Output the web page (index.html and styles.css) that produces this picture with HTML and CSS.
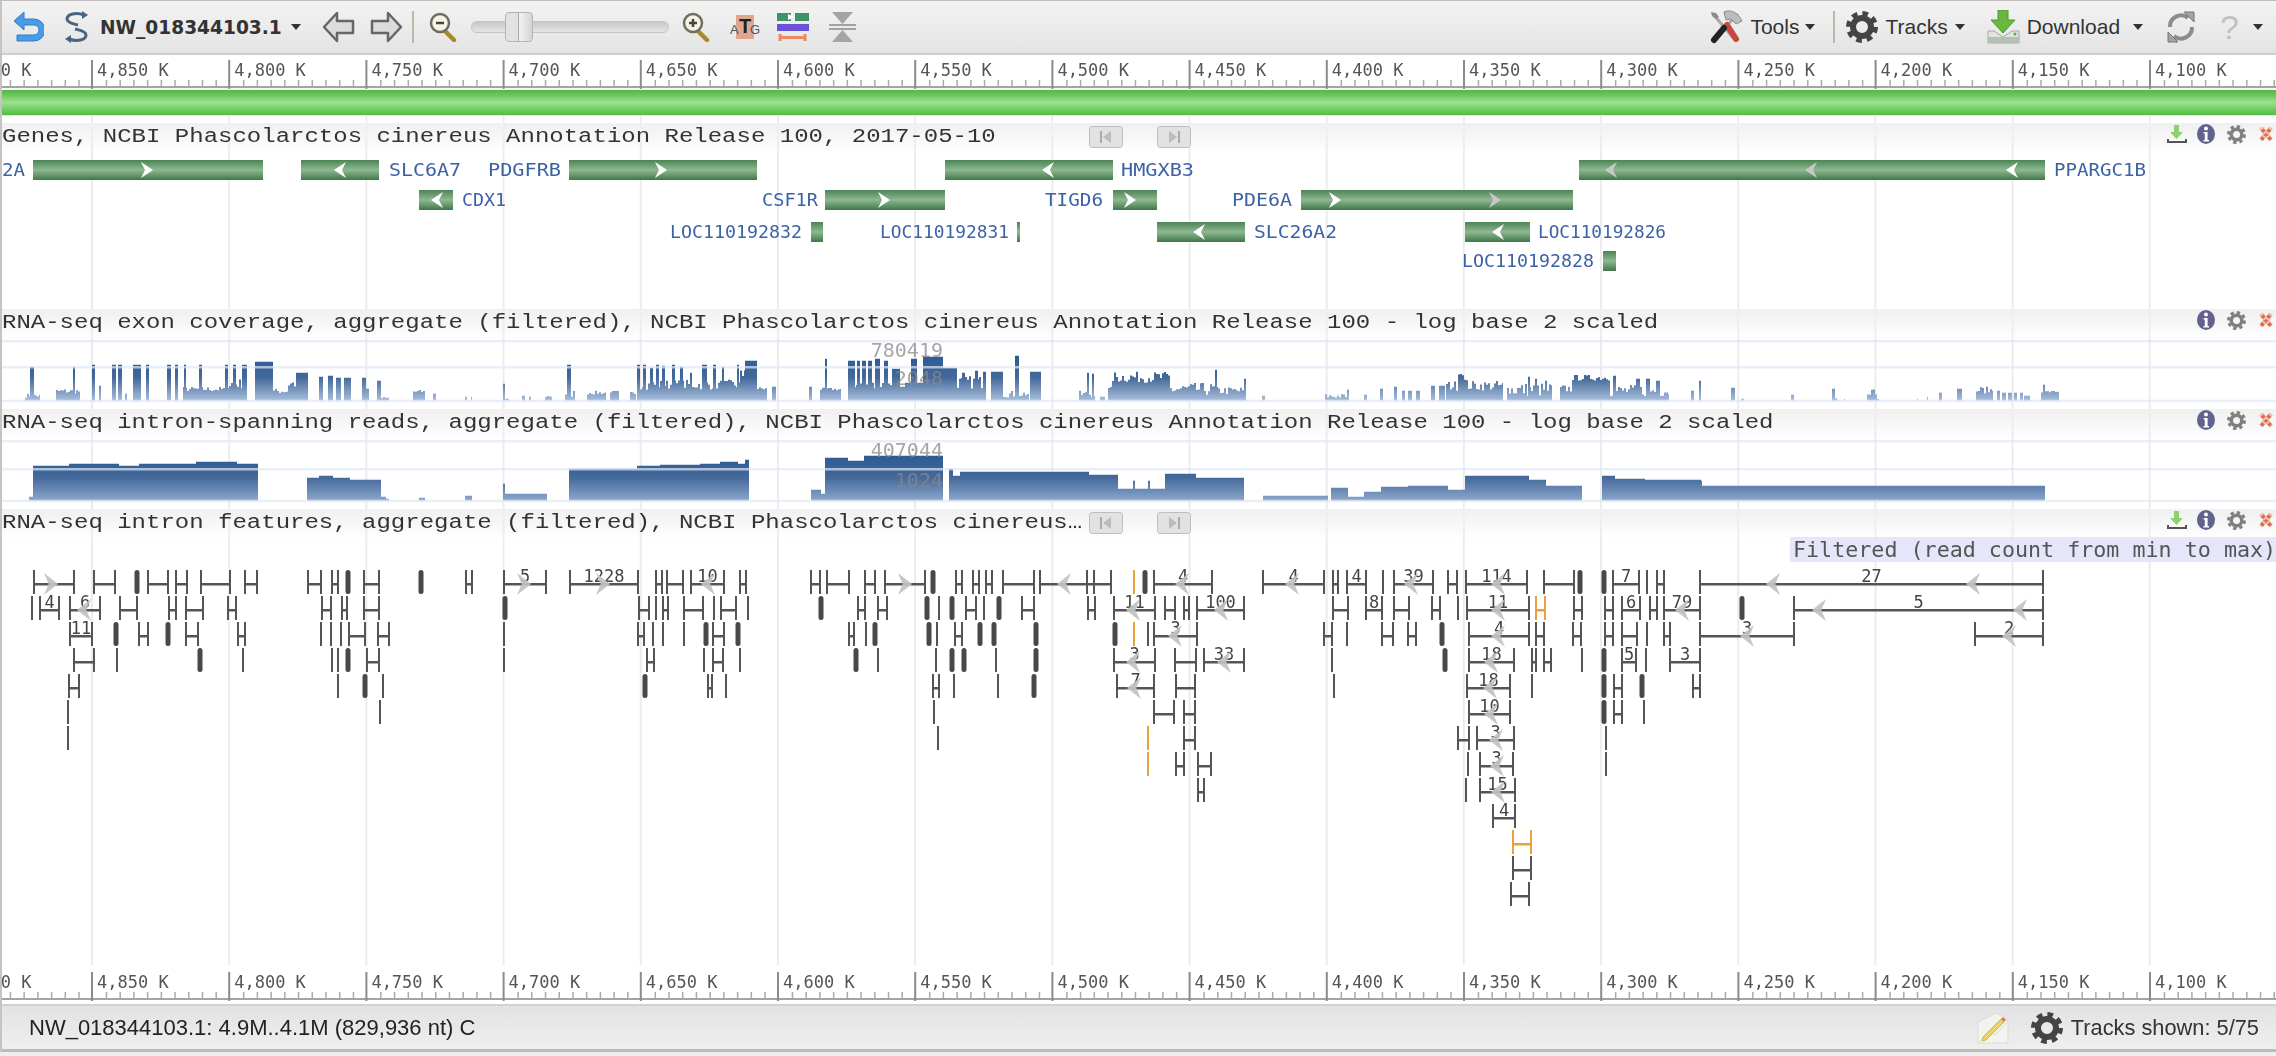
FILE: index.html
```html
<!DOCTYPE html>
<html lang="en">
  <head>
    <meta charset="UTF-8" />
    <title>NW_018344103.1 genome view</title>
    <link rel="stylesheet" href="styles.css">
  </head>

  <body>
    <!-- shared icons -->
    <svg class="defs" width="0" height="0">
      <symbol id="gear" viewBox="0 0 32 32">
        <circle cx="16" cy="16" r="9" fill="none" stroke="currentColor" stroke-width="6" />
        <circle cx="16" cy="16" r="13.5" fill="none" stroke="currentColor" stroke-width="5" stroke-dasharray="5.6 5" />
      </symbol>
      <symbol id="info" viewBox="0 0 18 20">
        <ellipse cx="9" cy="10" rx="9" ry="10" fill="#62628f" />
        <circle cx="9" cy="4.6" r="2" fill="#fff" />
        <path d="M6.6 8h4v8h1.4v1.6H6.4V16h1.4V9.6H6.6z" fill="#fff" />
      </symbol>
      <symbol id="close" viewBox="0 0 14 16">
        <path d="M2 2l10 12M12 2L2 14" stroke="#dc6a52" stroke-width="4" />
        <path d="M2 2l10 12M12 2L2 14" stroke="#f4c4b0" stroke-width="4" stroke-dasharray="2 3" />
      </symbol>
      <symbol id="save" viewBox="0 0 20 20">
        <path d="M7 1h5v7h4l-6.500 7L3 8h4z" fill="#8ed070" />
        <path d="M1 15v3h18v-3" fill="none" stroke="#555" stroke-width="2" />
      </symbol>
      <symbol id="first" viewBox="0 0 34 22">
        <rect x="0.500" y="0.500" width="33" height="21" rx="3" fill="#e2e2e2" stroke="#bdbdbd" />
        <path d="M12 5v12" stroke="#aaa" stroke-width="2" />
        <path d="M22 5v12l-8-6z" fill="#bcbcbc" />
      </symbol>
      <symbol id="last" viewBox="0 0 34 22">
        <rect x="0.500" y="0.500" width="33" height="21" rx="3" fill="#e2e2e2" stroke="#bdbdbd" />
        <path d="M22 5v12" stroke="#aaa" stroke-width="2" />
        <path d="M12 5v12l8-6z" fill="#bcbcbc" />
      </symbol>
    </svg>

    <div class="app">
      <div class="toolbar">
        <svg class="ico back" width="31" height="30" viewBox="0 0 31 30">
          <path d="M11 0L1 9l10 9v-5h10a5 5 0 0 1 0 10H4v6h17a11 11 0 0 0 0-22H11z" fill="#4a9be6" stroke="#2f7fc8" />
        </svg>
        <svg class="ico swirl" width="27" height="32" viewBox="0 0 27 32">
          <path d="M21 4C13 1 4 3 4 8c0 4 7 5 11 6" fill="none" stroke="#48647f" stroke-width="3" />
          <path d="M6 28c8 3 17 1 17-4 0-4-7-5-11-6" fill="none" stroke="#48647f" stroke-width="3" />
          <path d="M19 0l6 4-6 4zM8 24l-6 4 6 4z" fill="#48647f" />
        </svg>
        <span class="seq-name">NW_018344103.1</span>
        <span class="caret"></span>
        <svg class="ico nav-l" width="33" height="32" viewBox="0 0 33 32">
          <path d="M15 2L2 16l13 14v-8h16V10H15z" fill="#dcdcdc" stroke="#666" stroke-width="2.500" stroke-linejoin="round" />
        </svg>
        <svg class="ico nav-r" width="33" height="32" viewBox="0 0 33 32">
          <path d="M18 2l13 14-13 14v-8H2V10h16z" fill="#dcdcdc" stroke="#666" stroke-width="2.500" stroke-linejoin="round" />
        </svg>
        <span class="sep first-sep"></span>
        <svg class="ico zoom-out" width="28" height="30" viewBox="0 0 28 30">
          <path d="M16 19l9 9" stroke="#a88a2c" stroke-width="4.500" stroke-linecap="round" />
          <circle cx="11" cy="11" r="9" fill="#f4f4e6" stroke="#6e6e5e" stroke-width="2.500" />
          <path d="M7 11h8" stroke="#444" stroke-width="2.500" />
        </svg>
        <div class="slider"><span class="thumb"></span></div>
        <svg class="ico zoom-in" width="28" height="30" viewBox="0 0 28 30">
          <path d="M16 19l9 9" stroke="#a88a2c" stroke-width="4.500" stroke-linecap="round" />
          <circle cx="11" cy="11" r="9" fill="#f4f4e6" stroke="#6e6e5e" stroke-width="2.500" />
          <path d="M7 11h8M11 7v8" stroke="#444" stroke-width="2.500" />
        </svg>
        <svg class="ico atg" width="30" height="30" viewBox="0 0 30 30">
          <rect x="6" y="3" width="18" height="24" fill="#e0a78e" />
          <text x="0" y="22" class="atg-a">A</text>
          <text x="9" y="21" class="atg-t">T</text>
          <text x="20" y="22" class="atg-g">G</text>
        </svg>
        <svg class="ico colors" width="32" height="30" viewBox="0 0 32 30">
          <rect x="0" y="1" width="14" height="8" fill="#3d9465" />
          <rect x="18" y="1" width="14" height="8" fill="#3d9465" />
          <path d="M11 2l7 3-7 3z" fill="#fff" />
          <rect x="0" y="12" width="32" height="7" fill="#6a52d8" />
          <path d="M3 22v7M28 22v7M3 25.500h25" stroke="#ec8a62" stroke-width="3" fill="none" />
        </svg>
        <svg class="ico squeeze" width="27" height="32" viewBox="0 0 27 32">
          <path d="M3 1h21l-10.500 12zM3 31h21L13.500 19z" fill="#a4a4a4" />
          <path d="M0 14h27M0 18h27" stroke="#8a8a8a" stroke-width="1.500" />
        </svg>

        <div class="tool-right">
          <svg class="ico" width="33" height="34" viewBox="0 0 33 34">
            <path d="M28 4L3 30" stroke="#a8a8a8" stroke-width="3" />
            <path d="M3 4l22 26" stroke="#a8a8a8" stroke-width="3" />
            <path d="M17 15l9 14" stroke="#c9473e" stroke-width="6" stroke-linecap="round" />
            <path d="M14 18L4 30" stroke="#222" stroke-width="6" stroke-linecap="round" />
            <path d="M14 2c6-3 14 0 18 9l-6 3-5-5-5 1z" fill="#bcbcbc" stroke="#8a8a8a" />
            <path d="M1 2l5 1 3 4-3 2-4-3z" fill="#8a8a8a" />
          </svg>
          <span class="tool-label">Tools</span>
          <span class="caret caret-tools"></span>
          <span class="sep tools-sep"></span>
          <svg class="ico gear-big"><use href="#gear" /></svg>
          <span class="tool-label">Tracks</span>
          <span class="caret caret-tracks"></span>
          <svg class="ico dl" width="33" height="34" viewBox="0 0 33 34">
            <path d="M11 0h10v10h7L16 23 4 10h7z" fill="#67b83c" stroke="#4c9a28" />
            <path d="M1 21h6l9 6 9-6h7v12H1z" fill="#e2e2e2" stroke="#a8a8a8" />
            <rect x="1" y="27" width="31" height="6" fill="#b4c0b4" />
            <circle cx="28" cy="24" r="1.500" fill="#58b040" />
          </svg>
          <span class="tool-label">Download</span>
          <span class="caret caret-dl"></span>
          <svg class="ico refresh" width="28" height="32" viewBox="0 0 28 32">
            <path d="M3 16A11 11 0 0 1 21 7" fill="none" stroke="#8c8c8c" stroke-width="4" />
            <path d="M25 16A11 11 0 0 1 7 25" fill="none" stroke="#8c8c8c" stroke-width="4" />
            <path d="M17 1h10v10zM11 31H1V21z" fill="#a4a4a4" stroke="#777" />
          </svg>
          <span class="help">?</span>
          <span class="caret caret-help"></span>
        </div>
      </div>

      <div class="viewport">
        <div class="gridlines"></div>

        <svg class="ruler" id="rulerTop"></svg>
        <div class="overview"></div>

        <div class="track genes">
          <div class="track-head">
            <span class="title">Genes, NCBI Phascolarctos cinereus Annotation Release 100, 2017-05-10</span>
            <svg class="pager pager-first"><use href="#first" /></svg>
            <svg class="pager pager-last"><use href="#last" /></svg>
            <div class="actions">
              <svg class="act-save"><use href="#save" /></svg>
              <svg class="act-info"><use href="#info" /></svg>
              <svg class="act-gear"><use href="#gear" /></svg>
              <svg class="act-close"><use href="#close" /></svg>
            </div>
          </div>
          <svg class="plot" id="genePlot"></svg>
        </div>

        <div class="track graph">
          <div class="track-head">
            <span class="title">RNA-seq exon coverage, aggregate (filtered), NCBI Phascolarctos cinereus Annotation Release 100 - log base 2 scaled</span>
            <div class="actions">
              <svg class="act-info"><use href="#info" /></svg>
              <svg class="act-gear"><use href="#gear" /></svg>
              <svg class="act-close"><use href="#close" /></svg>
            </div>
          </div>
          <svg class="plot" id="exonPlot"></svg>
        </div>

        <div class="track graph">
          <div class="track-head">
            <span class="title">RNA-seq intron-spanning reads, aggregate (filtered), NCBI Phascolarctos cinereus Annotation Release 100 - log base 2 scaled</span>
            <div class="actions">
              <svg class="act-info"><use href="#info" /></svg>
              <svg class="act-gear"><use href="#gear" /></svg>
              <svg class="act-close"><use href="#close" /></svg>
            </div>
          </div>
          <svg class="plot" id="spanPlot"></svg>
        </div>

        <div class="track features">
          <div class="track-head">
            <span class="title">RNA-seq intron features, aggregate (filtered), NCBI Phascolarctos cinereus…</span>
            <svg class="pager pager-first"><use href="#first" /></svg>
            <svg class="pager pager-last"><use href="#last" /></svg>
            <div class="actions">
              <svg class="act-save"><use href="#save" /></svg>
              <svg class="act-info"><use href="#info" /></svg>
              <svg class="act-gear"><use href="#gear" /></svg>
              <svg class="act-close"><use href="#close" /></svg>
            </div>
          </div>
          <svg class="plot" id="featPlot"></svg>
          <span class="filter-note">Filtered (read count from min to max)</span>
        </div>

        <svg class="ruler ruler-bottom" id="rulerBottom"></svg>
      </div>

      <div class="statusbar">
        <span class="location">NW_018344103.1: 4.9M..4.1M (829,936 nt) C</span>
        <svg class="ico note" width="32" height="32" viewBox="0 0 32 32">
          <path d="M1 10L20 1l11 8v22H1z" fill="#f4f4ee" stroke="#dcdcd4" />
          <path d="M1 31l13-11 4 3 13-14" fill="none" stroke="#dcdcd4" />
          <path d="M6 25L24 7l3 3L9 28l-4 1z" fill="#ecd566" stroke="#cdb54c" />
          <path d="M24 7l2-2 3 3-2 2z" fill="#d87a7a" />
        </svg>
        <svg class="ico gear-status"><use href="#gear" /></svg>
        <span class="tracks-shown">Tracks shown: 5/75</span>
      </div>
    </div>

    <script src="script.js"></script>
  </body>
</html>
```

FILE: styles.css
```css
* {
  box-sizing: border-box;
}

html,
body {
  margin: 0;
  height: 100%;
  overflow: hidden;
  background-color: #eceef0;
  font-family: "Liberation Sans", Arial, sans-serif;
}

.defs {
  position: absolute;
}

.app {
  position: relative;
  display: flex;
  flex-direction: column;
  height: 1052px;
  filter: blur(0.45px);
}

.app::after {
  content: "";
  position: absolute;
  top: 0;
  bottom: 0;
  left: 0;
  width: 2px;
  background-color: #c8c2c2;
}

.ico {
  flex: none;
  display: block;
}

.toolbar {
  flex: none;
  display: flex;
  align-items: center;
  height: 55px;
  padding-left: 13px;
  border-top: 1px solid #c4b9b9;
  border-bottom: 2px solid #cfcfcf;
  background: linear-gradient(#f3f3f3, #e4e4e4);
}

.swirl {
  margin-left: 19px;
}

.seq-name {
  margin-left: 10px;
  font-family: "DejaVu Sans", sans-serif;
  font-size: 18.6px;
  font-weight: bold;
  color: #333;
}

.caret {
  flex: none;
  width: 0;
  height: 0;
  margin-left: 9px;
  border-left: 5px solid transparent;
  border-right: 5px solid transparent;
  border-top: 6px solid #333;
}

.nav-l {
  margin-left: 21px;
}

.nav-r {
  margin-left: 15px;
}

.sep {
  flex: none;
  width: 2px;
  height: 32px;
  background-color: #bdb8a8;
}

.first-sep {
  margin-left: 9px;
}

.zoom-out {
  margin-left: 15px;
}

.slider {
  position: relative;
  flex: none;
  width: 198px;
  height: 12px;
  margin-left: 14px;
  border: 1px solid #c4c4c4;
  border-radius: 6px;
  background: linear-gradient(#c8c8c8, #e4e4e4);
}

.thumb {
  position: absolute;
  top: -10px;
  left: 33px;
  width: 28px;
  height: 30px;
  border: 1px solid #b4b4b4;
  border-radius: 4px;
  background: linear-gradient(90deg, #e2e2e2 45%, #a8a8a8 48%, #f2f2f2 52%, #d4d4d4);
}

.zoom-in {
  margin-left: 13px;
}

.atg {
  margin-left: 20px;
}

.atg-a,
.atg-g {
  font-family: "Liberation Sans", sans-serif;
  font-size: 13px;
  fill: #555;
}

.atg-t {
  font-family: "Liberation Sans", sans-serif;
  font-size: 20px;
  font-weight: bold;
  fill: #222;
}

.colors {
  margin-left: 17px;
}

.squeeze {
  margin-left: 20px;
}

.tool-right {
  display: flex;
  align-items: center;
  margin-left: auto;
  padding-right: 13px;
}

.tool-label {
  margin-left: 7px;
  font-size: 21px;
  color: #333;
}

.caret-tools {
  margin-left: 6px;
}

.caret-tracks {
  margin-left: 7px;
}

.caret-dl {
  margin-left: 13px;
}

.caret-help {
  margin-left: 14px;
}

.tools-sep {
  margin-left: 18px;
}

.gear-big {
  width: 32px;
  height: 32px;
  margin-left: 11px;
  color: #444;
}

.dl {
  margin-left: 22px;
}

.refresh {
  margin-left: 24px;
}

.help {
  margin-left: 25px;
  font-size: 34px;
  line-height: 34px;
  color: #c0c0c0;
}

.viewport {
  position: relative;
  flex: 1;
  display: flex;
  flex-direction: column;
  min-height: 0;
  background-color: #fff;
}

.gridlines {
  position: absolute;
  top: 61px;
  bottom: 39px;
  left: 0;
  right: 0;
  background-image: linear-gradient(to right, #ececee 2px, transparent 2px);
  background-size: 137.2px 100%;
  background-position: 91px 0;
}

.ruler {
  position: relative;
  flex: none;
  display: block;
  width: 100%;
  height: 35px;
}

.ruler-bottom {
  margin-bottom: 2px;
}

.ruler-label {
  font-family: "DejaVu Sans Mono", monospace;
  font-size: 17px;
  fill: #555;
}

.overview {
  position: relative;
  flex: none;
  height: 26px;
  margin-bottom: 7px;
  border-bottom: 1px solid #d8f0d4;
  background: linear-gradient(#52b842, #66c557 18%, #9ce192 50%, #69c95a 82%, #55bb45);
}

.track {
  position: relative;
  flex: none;
  display: flex;
  flex-direction: column;
}

.genes {
  height: 186px;
}

.graph {
  height: 100px;
}

.features {
  flex: 1;
  min-height: 0;
}

.track-head {
  position: relative;
  flex: none;
  height: 30px;
  padding-left: 2px;
  background: linear-gradient(#f0f0f0, rgba(255, 255, 255, 0));
}

.title {
  display: inline-block;
  font-family: "Liberation Mono", monospace;
  font-size: 20px;
  line-height: 28px;
  color: #333;
  white-space: nowrap;
  transform: scaleX(1.2);
  transform-origin: left center;
}

.pager {
  position: absolute;
  top: 3px;
  width: 34px;
  height: 22px;
}

.pager-first {
  left: 1089px;
}

.pager-last {
  left: 1157px;
}

.actions {
  position: absolute;
  top: 0;
  right: 3px;
  display: flex;
  align-items: center;
  height: 22px;
}

.actions svg {
  display: block;
  flex: none;
}

.act-save {
  width: 20px;
  height: 20px;
  margin-right: 10px;
}

.act-info {
  width: 18px;
  height: 20px;
}

.act-gear {
  width: 19px;
  height: 19px;
  margin-left: 12px;
  color: #808080;
}

.act-close {
  width: 14px;
  height: 16px;
  margin-left: 13px;
}

.plot {
  flex: 1;
  display: block;
  width: 100%;
  min-height: 0;
  overflow: visible;
}

.gene-label {
  font-family: "DejaVu Sans Mono", monospace;
  font-size: 18px;
  fill: #3c62a6;
}

.graph-label {
  font-family: "DejaVu Sans Mono", monospace;
  font-size: 20px;
  fill: #888;
  fill-opacity: 0.75;
}

.feat-label {
  font-family: "DejaVu Sans Mono", monospace;
  font-size: 17px;
  fill: #444;
}

.filter-note {
  position: absolute;
  top: 28px;
  left: 1790px;
  right: 0;
  height: 25px;
  padding-left: 3px;
  overflow: hidden;
  font-family: "DejaVu Sans Mono", monospace;
  font-size: 21.7px;
  line-height: 25px;
  color: #555;
  white-space: nowrap;
  background-color: #e6e6fa;
}

.statusbar {
  flex: none;
  display: flex;
  align-items: center;
  height: 48px;
  padding: 0 17px 0 29px;
  border-top: 2px solid #d2d2d2;
  border-bottom: 3px solid #c4b9b9;
  background: linear-gradient(#e2e2e2, #efefef);
}

.location {
  flex: 1;
  font-size: 22px;
  color: #222;
}

.gear-status {
  width: 32px;
  height: 32px;
  margin-left: 22px;
  color: #444;
}

.tracks-shown {
  margin-left: 8px;
  font-size: 21.8px;
  color: #333;
}
```

FILE: script.js
```js
const SVG_NS = "http://www.w3.org/2000/svg";
const WIDTH = 2276;
const TICK0 = 92;
const TICK_STEP = 137.2;

function el(parent, name, attrs, text) {
  const node = document.createElementNS(SVG_NS, name);
  for (const key in attrs) node.setAttribute(key, attrs[key]);
  if (text !== undefined) node.textContent = text;
  parent.appendChild(node);
  return node;
}

// ---- rulers ----
function drawRuler(svg) {
  el(svg, "rect", { x: 0, y: 31, width: WIDTH, height: 2, fill: "#a4a4a4" });
  for (let i = -1; i < 17; i++) {
    const x = TICK0 + i * TICK_STEP;
    el(svg, "rect", { x: x - 1, y: 5, width: 2, height: 29, fill: "#8c8c8c" });
    el(svg, "text", { x: x + 5, y: 21, class: "ruler-label" }, (4850 - i * 50).toLocaleString("en-US") + " K");
    for (let j = 1; j < 10; j++) {
      el(svg, "rect", { x: x + (j * TICK_STEP) / 10, y: 25, width: 1.5, height: 6, fill: "#aaa" });
    }
  }
}

// ---- genes ----
const BAR_ROWS = [7, 37, 69, 98];

const genes = [
  // row, x0, x1, arrow direction, arrows [x, faded], label, label x, label width
  [0, 33, 263, 1, [[147]], "2A", 2, 23],
  [0, 301, 379, -1, [[340]], "SLC6A7", 389, 72],
  [0, 569, 757, 1, [[661]], "PDGFRB", 488, 73],
  [0, 945, 1113, -1, [[1048]], "HMGXB3", 1121, 73],
  [0, 1579, 2045, -1, [[1611, 1], [1811, 1], [2012]], "PPARGC1B", 2054, 92],
  [1, 419, 453, -1, [[437]], "CDX1", 462, 44],
  [1, 825, 945, 1, [[884]], "CSF1R", 762, 56],
  [1, 1113, 1157, 1, [[1130]], "TIGD6", 1045, 58],
  [1, 1301, 1573, 1, [[1335], [1495, 1]], "PDE6A", 1232, 60],
  [2, 811, 823, 0, [], "LOC110192832", 670, 132],
  [2, 1017, 1020, 0, [], "LOC110192831", 880, 129],
  [2, 1157, 1245, -1, [[1199]], "SLC26A2", 1254, 83],
  [2, 1465, 1530, -1, [[1498]], "LOC110192826", 1538, 128],
  [3, 1603, 1616, 0, [], "LOC110192828", 1462, 132],
];

function drawArrow(svg, x, y, dir, w, h, fill, opacity) {
  const d = `M${x - (dir * w) / 2} ${y - h / 2}L${x + (dir * w) / 2} ${y}L${x - (dir * w) / 2} ${y + h / 2}L${x - (dir * w) / 6} ${y}Z`;
  el(svg, "path", { d: d, fill: fill, "fill-opacity": opacity === undefined ? 1 : opacity });
}

function drawGenes(svg) {
  const defs = el(svg, "defs", {});
  const grad = el(defs, "linearGradient", { id: "geneFill", x1: 0, y1: 0, x2: 0, y2: 1 });
  el(grad, "stop", { offset: "0", "stop-color": "#4c8452" });
  el(grad, "stop", { offset: "0.5", "stop-color": "#8db893" });
  el(grad, "stop", { offset: "1", "stop-color": "#3f7846" });
  genes.forEach(([row, x0, x1, dir, arrows, label, labelX, labelW]) => {
    const y = BAR_ROWS[row];
    el(svg, "rect", { x: x0, y: y, width: x1 - x0, height: 20, fill: "url(#geneFill)" });
    arrows.forEach(([ax, faded]) => {
      drawArrow(svg, ax, y + 10, dir, 12, 16, faded ? "#c8c8c8" : "#fff");
    });
    el(svg, "text", { x: labelX, y: y + 16, textLength: labelW, lengthAdjust: "spacingAndGlyphs", class: "gene-label" }, label);
  });
}

// ---- graphs ----
let seed = 7;
function rnd() {
  seed = (seed * 16807) % 2147483647;
  return seed / 2147483647;
}

function ragged(x0, x1, low, high) {
  const out = [];
  for (let x = x0; x < x1; x += 2) {
    out.push([x, Math.min(x + 2, x1), low + rnd() * (high - low)]);
  }
  return out;
}

const exonBars = [
  ...ragged(25, 40, 3, 7), [30, 34, 34],
  ...ragged(56, 80, 7, 12), [73, 75, 34],
  [92, 95, 36], [99, 101, 15], [112, 116, 36], [118, 122, 36], [125, 127, 7],
  [133, 141, 36], [146, 149, 36], [167, 171, 36], [175, 178, 36], [184, 186, 36],
  ...ragged(183, 225, 9, 14), ...ragged(225, 247, 12, 22),
  [199, 202, 36], [225, 228, 36], [233, 236, 36], [242, 247, 36], [255, 273, 39],
  ...ragged(273, 288, 7, 12), ...ragged(288, 298, 12, 22), [296, 308, 28],
  [319, 323, 24], [328, 333, 25], [336, 341, 23], [344, 351, 23], [362, 366, 23],
  [366, 369, 12], [377, 381, 20], ...ragged(381, 389, 1, 4),
  ...ragged(413, 425, 7, 11), [433, 436, 7], [465, 467, 4], [471, 472, 4],
  [503, 505, 17], [505, 509, 2], [522, 525, 5], [529, 531, 4], ...ragged(545, 552, 3, 6),
  ...ragged(565, 575, 3, 11), [567, 571, 36],
  ...ragged(587, 606, 6, 10), ...ragged(610, 619, 8, 10), ...ragged(630, 636, 6, 9),
  ...ragged(640, 745, 11, 21), ...ragged(757, 767, 10, 14), ...ragged(740, 750, 20, 34),
  [637, 640, 36], [643, 646, 36], [650, 653, 33], [656, 659, 36], [662, 665, 35],
  [672, 675, 36], [680, 683, 34], [690, 692, 28], [702, 707, 36], [713, 716, 36],
  [722, 724, 34], [737, 739, 36], [745, 757, 40], [772, 776, 14],
  [809, 812, 14], ...ragged(820, 841, 10, 13), [825, 827, 42],
  ...ragged(848, 892, 12, 20),
  [848, 855, 40], [857, 860, 40], [862, 866, 40], [868, 872, 40], [875, 880, 42],
  [884, 888, 40], [892, 900, 32], [900, 905, 14], [905, 911, 18], [911, 917, 42], [917, 923, 18],
  [923, 943, 44], [943, 957, 33], ...ragged(957, 986, 12, 25),
  [962, 965, 28], [975, 978, 30], [983, 986, 29], [991, 1003, 29], ...ragged(1003, 1015, 3, 10),
  [1015, 1019, 45], ...ragged(1019, 1029, 4, 10), [1030, 1041, 29],
  ...ragged(1079, 1095, 3, 10), [1087, 1089, 28], [1092, 1094, 27], [1100, 1105, 4],
  ...ragged(1108, 1112, 8, 14), ...ragged(1112, 1170, 18, 29), ...ragged(1170, 1216, 5, 18),
  [1215, 1217, 31], ...ragged(1216, 1244, 6, 14), [1244, 1246, 22], [1262, 1265, 5],
  ...ragged(1325, 1347, 2, 7), [1347, 1349, 11], [1364, 1367, 6], [1380, 1383, 12],
  [1394, 1397, 14], [1402, 1405, 10], [1408, 1412, 10], [1416, 1420, 10],
  [1431, 1435, 15], [1439, 1445, 15], ...ragged(1446, 1503, 10, 20), ...ragged(1458, 1468, 20, 29),
  ...ragged(1507, 1552, 4, 18), [1528, 1530, 24], [1535, 1537, 22], [1545, 1547, 20],
  ...ragged(1560, 1572, 8, 16), ...ragged(1572, 1610, 20, 26), ...ragged(1610, 1669, 4, 16),
  [1613, 1616, 25], [1636, 1640, 22], [1646, 1650, 22], [1656, 1660, 20],
  [1691, 1694, 10], [1699, 1701, 20], [1731, 1735, 13], [1741, 1744, 2], [1791, 1794, 6],
  [1832, 1835, 12], ...ragged(1835, 1838, 1, 3), [1844, 1845, 2],
  ...ragged(1867, 1877, 6, 12), ...ragged(1877, 1879, 1, 2), [1917, 1918, 2], [1927, 1928, 4],
  [1939, 1942, 8], [1957, 1962, 12], ...ragged(1976, 1993, 7, 14), [1997, 2000, 10],
  [2002, 2006, 8], [2008, 2012, 8], [2014, 2017, 8], [2020, 2023, 8], [2024, 2030, 5],
  ...ragged(2041, 2059, 8, 10), [2043, 2045, 16],
];

const spanBars = [
  [29, 33, 4], [33, 69, 35], [69, 119, 37], [119, 139, 35], [139, 196, 37], [196, 237, 39], [237, 258, 37],
  [307, 319, 23], [319, 333, 25], [333, 350, 23], [350, 381, 21], [381, 386, 4], [386, 389, 2],
  [419, 425, 3], [465, 472, 5], [503, 505, 17], [505, 547, 7],
  [569, 637, 32], [637, 660, 35], [660, 700, 36], [700, 720, 37], [720, 738, 39], [738, 745, 37], [745, 749, 41],
  [811, 821, 11], [821, 825, 7], [825, 848, 43], [848, 864, 40], [864, 943, 45],
  [949, 953, 32], [953, 960, 25], [960, 1089, 29], [1089, 1118, 26], [1118, 1133, 12], [1133, 1135, 20],
  [1135, 1148, 12], [1148, 1150, 20], [1150, 1165, 12], [1165, 1196, 27], [1196, 1244, 23],
  [1263, 1328, 5], [1331, 1348, 13], [1348, 1364, 4], [1364, 1381, 9], [1381, 1408, 14], [1408, 1448, 15],
  [1448, 1465, 11], [1465, 1529, 25], [1529, 1546, 21], [1546, 1582, 15],
  [1602, 1615, 25], [1615, 1645, 22], [1645, 1701, 21], [1700, 1702, 20], [1701, 2045, 15],
];

function drawGraph(svg, id, bars, ys, labels, bottomColor) {
  const base = ys[2];
  const defs = el(svg, "defs", {});
  const grad = el(defs, "linearGradient", { id: id, gradientUnits: "userSpaceOnUse", x1: 0, y1: base - 46, x2: 0, y2: base });
  el(grad, "stop", { offset: "0", "stop-color": "#2c5a92" });
  el(grad, "stop", { offset: "0.5", "stop-color": "#44699a" });
  el(grad, "stop", { offset: "1", "stop-color": bottomColor });

  let d = "";
  bars.forEach(([x0, x1, h]) => {
    d += `M${x0} ${base}V${(base - h).toFixed(1)}H${x1}V${base}Z`;
  });
  el(svg, "path", { d: d, fill: `url(#${id})` });

  ys.forEach((y) => {
    el(svg, "rect", { x: 0, y: y - 1, width: WIDTH, height: 2.5, fill: "#dfe8f6", "fill-opacity": 0.7 });
  });
  labels.forEach(([text, y]) => {
    el(svg, "text", { x: 943, y: y, "text-anchor": "end", class: "graph-label" }, text);
  });
}

// ---- intron features ----
const S = (x) => ({ x0: x, x1: x, kind: "single" });
const O = (x) => ({ x0: x, x1: x, kind: "orange" });
const B = (x) => ({ x0: x, x1: x, kind: "bold" });
const H = (x0, x1, label, dir, arrows) => ({ x0, x1, label, dir, arrows, kind: "span" });
const OH = (x0, x1) => ({ x0, x1, kind: "orangeSpan" });

const featureRows = [
  [
    H(34, 74, "", 1, [51]), H(94, 115), B(137), H(148, 168), H(176, 187), H(201, 230), H(245, 257),
    H(308, 321), H(332, 338), B(348), H(364, 379), B(421), H(466, 472), H(504, 546, "5", 1, [524]),
    H(570, 638, "1228", 1, [603]), H(656, 662), H(667, 683), H(691, 724, "10", -1, [708]), H(740, 746),
    H(811, 820), H(827, 849), H(865, 875), H(885, 925, "", 1, [905]), B(933), H(956, 962), H(973, 979),
    H(986, 992), H(1003, 1034), H(1040, 1087, "", -1, [1064]), H(1087, 1094), H(1094, 1111), O(1134), B(1145),
    H(1154, 1212, "4", -1, [1182]), H(1263, 1324, "4", -1, [1292]), H(1333, 1338), H(1347, 1366, "4"),
    S(1383), H(1394, 1433, "39", -1, [1411]), H(1448, 1457), H(1466, 1527, "114", -1, [1498]), H(1544, 1574),
    B(1580), B(1604), H(1613, 1639, "7"), S(1647), H(1657, 1664),
    H(1700, 2043, "27", -1, [1773, 1973]),
  ],
  [
    S(32), H(40, 59, "4"), H(70, 100, "6", -1, [84]), H(120, 137), H(169, 176), H(186, 203), H(228, 236),
    H(322, 331), H(342, 347), H(364, 379), B(505), H(639, 649), S(656), H(663, 668), H(684, 703), S(714),
    H(721, 736), S(748), B(821), H(858, 865), H(878, 887), B(927), S(939), B(952), H(966, 976), S(984), B(999),
    H(1022, 1034), H(1088, 1095), H(1114, 1155, "11", -1, [1133]), H(1165, 1175), H(1184, 1189),
    H(1197, 1244, "100", -1, [1221]), H(1333, 1348), H(1366, 1382, "8"), H(1394, 1409), H(1432, 1440), S(1458),
    H(1467, 1529, "11", -1, [1498]), OH(1536, 1545), H(1574, 1582), H(1605, 1613), H(1622, 1640, "6"),
    H(1650, 1657), H(1664, 1700, "79", -1, [1682]), B(1742), H(1794, 2043, "5", -1, [1819, 2020]),
  ],
  [
    H(70, 92, "11"), B(116), H(139, 148), B(168), H(186, 198), H(238, 245), S(321), S(331), S(341),
    H(349, 365), H(378, 389), S(504), H(638, 644), S(653), S(663), S(684), B(706), H(713, 724), B(738),
    H(849, 854), S(866), B(875), B(929), S(937), H(955, 962), B(980), B(994), B(1036), B(1115), O(1134),
    S(1148), H(1154, 1197, "3", -1, [1175]), H(1324, 1332), S(1347), H(1382, 1393), H(1408, 1416), B(1442),
    H(1469, 1529, "4", -1, [1498]), H(1536, 1544), H(1573, 1581), H(1605, 1613), H(1622, 1637), S(1647),
    H(1664, 1670), H(1700, 1794, "3", -1, [1747]), H(1975, 2043, "2", -1, [2009]),
  ],
  [
    H(74, 94), S(117), B(200), S(243), S(332), S(338), B(348), H(367, 379), S(504), H(647, 654), S(704),
    H(713, 723), S(740), B(856), S(878), S(936), B(952), B(964), S(996), B(1036),
    H(1114, 1155, "3", -1, [1133]), H(1175, 1196), H(1204, 1244, "33", -1, [1224]), S(1332), B(1445),
    H(1469, 1514, "18", -1, [1491]), H(1532, 1536), H(1544, 1551), S(1582), B(1604), H(1622, 1636, "5"), S(1646),
    H(1670, 1700, "3"),
  ],
  [
    H(69, 79), S(338), B(365), S(383), B(645), H(708, 712), S(726), H(933, 939), S(954), S(998), B(1034),
    H(1117, 1154, "7", -1, [1134]), H(1176, 1195), S(1334), H(1467, 1510, "18", -1, [1490]), S(1532), B(1604),
    H(1614, 1622), B(1642), H(1693, 1700),
  ],
  [S(68), S(380), S(934), H(1154, 1174), H(1184, 1195), H(1469, 1510, "10", -1, [1491]), B(1604), H(1614, 1622), S(1644)],
  [S(68), S(938), O(1148), H(1184, 1195), H(1458, 1469), H(1477, 1514, "3", -1, [1496]), S(1606)],
  [O(1148), H(1176, 1184), H(1198, 1211), S(1468), H(1480, 1513, "3", -1, [1497]), S(1606)],
  [H(1198, 1204), S(1466), H(1480, 1515, "15", -1, [1498])],
  [H(1493, 1515, "4")],
  [OH(1513, 1531)],
  [H(1513, 1531)],
  [H(1511, 1529)],
];

function drawFeature(svg, f, y) {
  const color = f.kind === "orange" || f.kind === "orangeSpan" ? "#e8a040" : "#555";
  const top = y - 14;
  const height = 24;
  if (f.kind === "bold") {
    el(svg, "rect", { x: f.x0 - 2.5, y: top, width: 5, height: height, rx: 2.5, fill: "#484848" });
    return;
  }
  el(svg, "rect", { x: f.x0 - 1, y: top, width: 2, height: height, fill: color });
  if (f.x1 === f.x0) return;
  el(svg, "rect", { x: f.x1 - 1, y: top, width: 2, height: height, fill: color });
  el(svg, "rect", { x: f.x0, y: y - 1, width: f.x1 - f.x0, height: 2.5, fill: color });
  if (f.label) {
    el(svg, "text", { x: (f.x0 + f.x1) / 2, y: y - 2, "text-anchor": "middle", class: "feat-label" }, f.label);
  }
  if (f.arrows) {
    f.arrows.forEach((ax) => drawArrow(svg, ax, y, f.dir, 14, 22, "#c2c2c2", 0.92));
  }
}

drawRuler(document.getElementById("rulerTop"));
drawRuler(document.getElementById("rulerBottom"));
drawGenes(document.getElementById("genePlot"));
drawGraph(document.getElementById("exonPlot"), "exonFill", exonBars, [2, 28, 61.7], [["780419", 18], ["2048", 46]], "#a9bfdc");
drawGraph(document.getElementById("spanPlot"), "spanFill", spanBars, [2, 30, 61.7], [["407044", 18], ["1024", 48]], "#8ba7cc");

const featPlot = document.getElementById("featPlot");
featureRows.forEach((row, i) => {
  row.forEach((f) => drawFeature(featPlot, f, 45 + 26 * i));
});
```
